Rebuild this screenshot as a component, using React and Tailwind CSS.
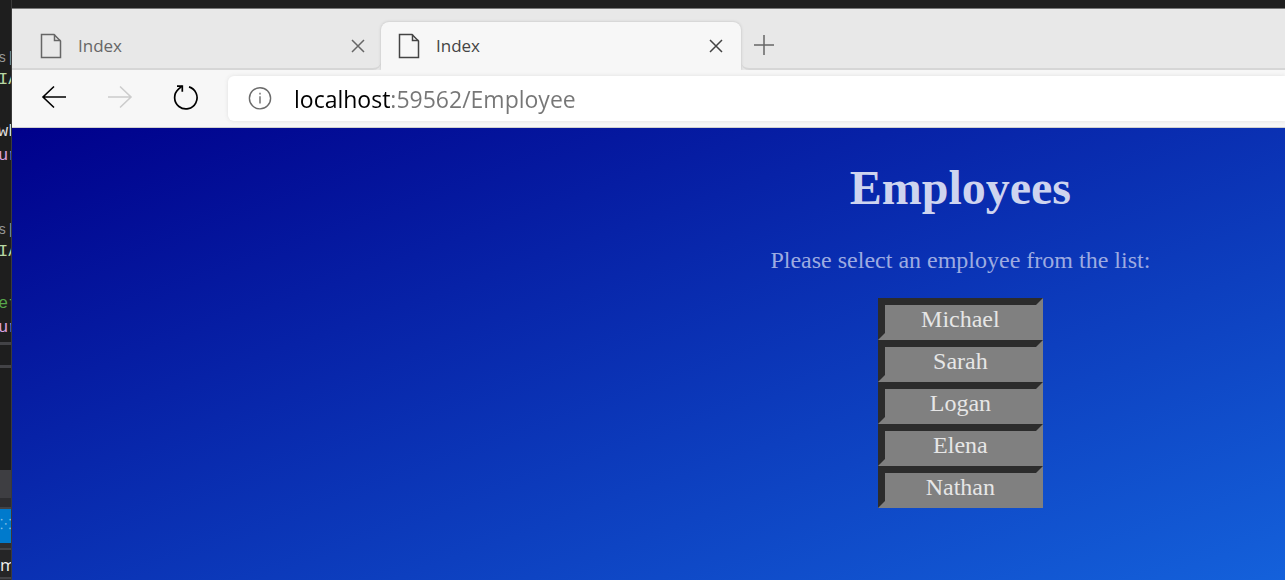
import React from "react";

const employees = ["Michael", "Sarah", "Logan", "Elena", "Nathan"];

function PageIcon() {
  return (
    <svg width="22" height="26" viewBox="0 0 22 26" fill="none" stroke="currentColor" strokeWidth="1.5" aria-hidden="true">
      <path d="M1.5 1.5H14L20.5 8V24.5H1.5Z" />
      <path d="M14.5 1.5V7.5H20.5" />
    </svg>
  );
}

function CloseIcon() {
  return (
    <svg width="14" height="14" viewBox="0 0 14 14" fill="none" stroke="currentColor" strokeWidth="1.5" aria-hidden="true">
      <path d="M1 1L13 13M13 1L1 13" />
    </svg>
  );
}

function EditorEdge() {
  return (
    <div
      aria-hidden="true"
      className="flex w-3 shrink-0 flex-col overflow-hidden border-r border-[#3a3a3a] bg-[#1e1e1e] font-['Liberation_Mono',monospace] text-[17px] leading-6 whitespace-pre"
    >
      <div className="-ml-0.5 flex flex-col pt-12">
        <span className="text-sm leading-5 text-[#999999]">s|</span>
        <span className="text-[#b8d7a3]">IA</span>
        <span className="mt-7 text-[#dcdcdc]">wh</span>
        <span className="text-[#d8a0df]">ur</span>
        <span className="mt-13 text-sm leading-5 text-[#999999]">s|</span>
        <span className="text-[#b8d7a3]">IA</span>
        <span className="mt-7 text-[#57a64a]">et</span>
        <span className="text-[#d8a0df]">ur</span>
      </div>
      <div className="mt-0.5 h-[3px] bg-[#434346]" />
      <div className="mt-5 h-[3px] bg-[#434346]" />
      <div className="mt-[102px] h-7 bg-[#3e3e42]" />
      <div className="h-[9px] bg-[#2d2d30]" />
      <div className="h-0.5 bg-[#434346]" />
      <div className="h-[34px] bg-[#007acc] text-sm leading-8 text-[#80bde5]">⁙⁙</div>
      <div className="h-[5px] bg-[#2d2d30]" />
      <div className="h-0.5 bg-[#434346]" />
      <div className="h-[27px] bg-[#252526] font-['Open_Sans',sans-serif] leading-[30px] text-[#f1f1f1]">m</div>
      <div className="flex-1 border-t-2 border-[#434346] bg-[#2d2d30]" />
    </div>
  );
}

function TabStrip() {
  return (
    <div className="flex h-[61px] items-end bg-[#e8e8e8] font-['Open_Sans',sans-serif] text-[17px]">
      <div className="flex h-12 w-[369px] items-center rounded-br-lg border-b-2 border-[#d6d6d6] pt-0.5 pr-4 pl-7 text-[#666666]">
        <button type="button" className="flex flex-1 items-center gap-4 text-left">
          <PageIcon />
          Index
        </button>
        <button type="button" aria-label="Close tab">
          <CloseIcon />
        </button>
      </div>
      <div className="flex h-12 w-[360px] items-center rounded-t-lg bg-[#f7f7f7] pr-[18px] pl-[17px] text-[#444444] shadow-[0_0_3px_#bbbbbb]">
        <button type="button" className="flex flex-1 items-center gap-4 text-left">
          <PageIcon />
          Index
        </button>
        <button type="button" aria-label="Close active tab">
          <CloseIcon />
        </button>
      </div>
      <div className="flex h-12 flex-1 items-center rounded-bl-lg border-b-2 border-[#d6d6d6] pl-[13px] text-[#666666]">
        <button type="button" aria-label="New tab">
          <svg width="20" height="20" viewBox="0 0 20 20" fill="none" stroke="currentColor" strokeWidth="1.5" aria-hidden="true">
            <path d="M10 0V20M0 10H20" />
          </svg>
        </button>
      </div>
    </div>
  );
}

function Toolbar() {
  return (
    <div className="relative flex h-[58px] items-center border-b border-[#d0d0d0] bg-[#f7f7f7] pl-[29px]">
      <button type="button" aria-label="Back" className="pb-1 text-black">
        <svg width="26" height="24" viewBox="0 0 26 24" fill="none" stroke="currentColor" strokeWidth="1.6" aria-hidden="true">
          <path d="M13 1.5L2 12L13 22.5M2 12H25" />
        </svg>
      </button>
      <button type="button" aria-label="Forward" disabled className="ml-10 pb-1 text-[#cccccc]">
        <svg width="26" height="24" viewBox="0 0 26 24" fill="none" stroke="currentColor" strokeWidth="1.6" aria-hidden="true">
          <path d="M13 1.5L24 12L13 22.5M24 12H1" />
        </svg>
      </button>
      <button type="button" aria-label="Refresh" className="ml-10 pb-1 text-black">
        <svg width="26" height="26" viewBox="0 0 26 26" fill="none" stroke="currentColor" strokeWidth="1.7" aria-hidden="true">
          <path d="M16 2.9A11.2 11.2 0 1 1 5.5 5.2L9 2.2" />
          <path d="M4 2.2H9.3V7.8" />
        </svg>
      </button>
      <div className="ml-[29px] flex h-[45px] flex-1 items-center rounded-l-md bg-white pl-5 shadow-[0_0_4px_#e0e0e0]">
        <svg width="24" height="24" viewBox="0 0 24 24" fill="none" stroke="#6b6b6b" strokeWidth="1.4" aria-hidden="true">
          <circle cx="12" cy="11.3" r="10.6" />
          <path d="M12 9.3V16.5M12 5.8V7.4" />
        </svg>
        <input
          type="text"
          aria-label="Address"
          defaultValue="localhost:59562/Employee"
          className="ml-[22px] h-10 min-w-0 flex-1 bg-linear-[to_right,black_97px,#767676_97px] bg-clip-text font-['Open_Sans',sans-serif] text-[23px] text-transparent caret-black outline-none"
        />
      </div>
    </div>
  );
}

export default function App() {
  return (
    <div className="flex min-h-screen overflow-hidden bg-[#1e1e1e]">
      <EditorEdge />
      <div className="flex min-w-0 flex-1 flex-col pt-2">
        <div className="border-t border-[#777777]">
          <TabStrip />
          <Toolbar />
        </div>
        <main className="flex flex-1 flex-col items-center bg-linear-[to_bottom_right,#00008b,#1461db] pt-8 pl-[49%] font-['Liberation_Serif',serif] text-2xl leading-7">
          <h1 className="text-5xl leading-14 font-bold text-[#ced4ef]">Employees</h1>
          <p className="mt-[30px] text-[#9dabe1]">Please select an employee from the list:</p>
          <ul className="mt-6 w-[165px] text-center text-[#e6e6e6]">
            {employees.map((name) => (
              <li key={name}>
                <a
                  href="#employee"
                  className="block border-[7px] border-t-[#2c2c2c] border-r-[#808080] border-b-[#808080] border-l-[#2c2c2c] bg-[#808080]"
                >
                  {name}
                </a>
              </li>
            ))}
          </ul>
        </main>
      </div>
    </div>
  );
}
